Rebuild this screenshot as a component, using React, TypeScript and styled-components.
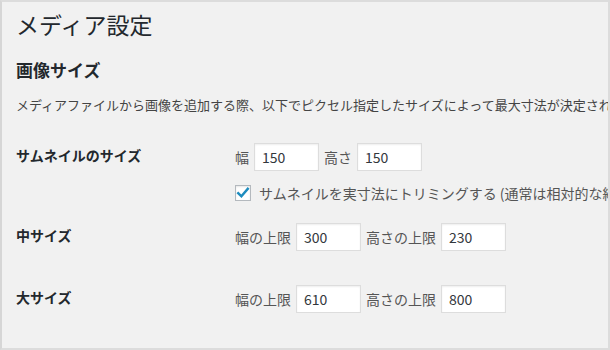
import React from 'react';
import styled, { createGlobalStyle } from 'styled-components';

const GlobalStyle = createGlobalStyle`
  html, body {
    margin: 0;
    padding: 0;
    background: #f1f1f1;
  }
  body {
    font-family: "Noto Sans CJK JP", "Noto Sans", sans-serif;
    color: #444;
  }
`;

const Frame = styled.div`
  box-sizing: border-box;
  width: 610px;
  height: 350px;
  border: 2px solid #dcdcdc;
  border-left-color: #d6d6d6;
  background: #f1f1f1;
  padding-left: 14px;
  overflow: hidden;
  white-space: nowrap;
  display: flex;
  flex-direction: column;
`;

const Title = styled.h1`
  margin: 7px 0 0;
  font-size: 23px;
  font-weight: 400;
  line-height: 30px;
  color: #23282d;
`;

const SectionTitle = styled.h2`
  margin: 19px 0 0;
  font-size: 17px;
  font-weight: 700;
  line-height: 24px;
  color: #23282d;
`;

const Description = styled.p`
  margin: 13px 0 0;
  font-size: 13px;
  line-height: 20px;
  color: #444;
`;

const Row = styled.div<{ $top: number }>`
  display: grid;
  grid-template-columns: 219px 1fr;
  align-items: start;
  margin-top: ${p => p.$top}px;
`;

const RowLabel = styled.div`
  font-size: 14px;
  font-weight: 700;
  line-height: 25px;
  color: #23282d;
`;

const Fields = styled.div`
  display: flex;
  flex-direction: column;
`;

const FieldLine = styled.div`
  display: flex;
  align-items: center;
  height: 28px;
`;

const FieldLabel = styled.label`
  font-size: 14px;
  color: #555;
  margin-right: 5px;
  & + & {
    margin-left: 0;
  }
`;

const NumberInput = styled.input`
  box-sizing: border-box;
  width: 65px;
  height: 28px;
  margin: 0 5px 0 0;
  padding: 0 7px;
  border: 1px solid #ddd;
  background: #fff;
  box-shadow: inset 0 1px 2px rgba(0, 0, 0, 0.07);
  font-family: "Noto Sans CJK JP", "Noto Sans", sans-serif;
  font-size: 14px;
  color: #32373c;
  outline: none;
`;

const CheckLine = styled.label`
  display: flex;
  align-items: center;
  height: 22px;
  margin-top: 11px;
  font-size: 14px;
  color: #555;
`;

const CheckBox = styled.span`
  box-sizing: border-box;
  width: 16px;
  height: 16px;
  margin-right: 8px;
  border: 1px solid #b4b9be;
  background: #fff;
  box-shadow: inset 0 1px 2px rgba(0, 0, 0, 0.1);
  display: flex;
  align-items: center;
  justify-content: center;
  flex-shrink: 0;
`;

function SizeFields({ w, h, wLabel, hLabel }: { w: string; h: string; wLabel: string; hLabel: string }) {
  return (
    <FieldLine>
      <FieldLabel>{wLabel}</FieldLabel>
      <NumberInput type="text" defaultValue={w} />
      <FieldLabel>{hLabel}</FieldLabel>
      <NumberInput type="text" defaultValue={h} />
    </FieldLine>
  );
}

export default function App() {
  return (
    <Frame>
      <GlobalStyle />
      <Title>メディア設定</Title>
      <SectionTitle>画像サイズ</SectionTitle>
      <Description>
        メディアファイルから画像を追加する際、以下でピクセル指定したサイズによって最大寸法が決定されます。
      </Description>

      <Row $top={28}>
        <RowLabel>サムネイルのサイズ</RowLabel>
        <Fields>
          <SizeFields wLabel="幅" hLabel="高さ" w="150" h="150" />
          <CheckLine>
            <CheckBox>
              <svg width="14" height="14" viewBox="0 0 14 14">
                <path d="M2.2 7.2 L5.4 10.3 L11.8 2.8" fill="none" stroke="#1e8cbe" strokeWidth="2.4" strokeLinecap="square" />
              </svg>
            </CheckBox>
            サムネイルを実寸法にトリミングする (通常は相対的な縮小によってサイズを調整します)
          </CheckLine>
        </Fields>
      </Row>

      <Row $top={19}>
        <RowLabel>中サイズ</RowLabel>
        <Fields>
          <SizeFields wLabel="幅の上限" hLabel="高さの上限" w="300" h="230" />
        </Fields>
      </Row>

      <Row $top={34}>
        <RowLabel>大サイズ</RowLabel>
        <Fields>
          <SizeFields wLabel="幅の上限" hLabel="高さの上限" w="610" h="800" />
        </Fields>
      </Row>
    </Frame>
  );
}
